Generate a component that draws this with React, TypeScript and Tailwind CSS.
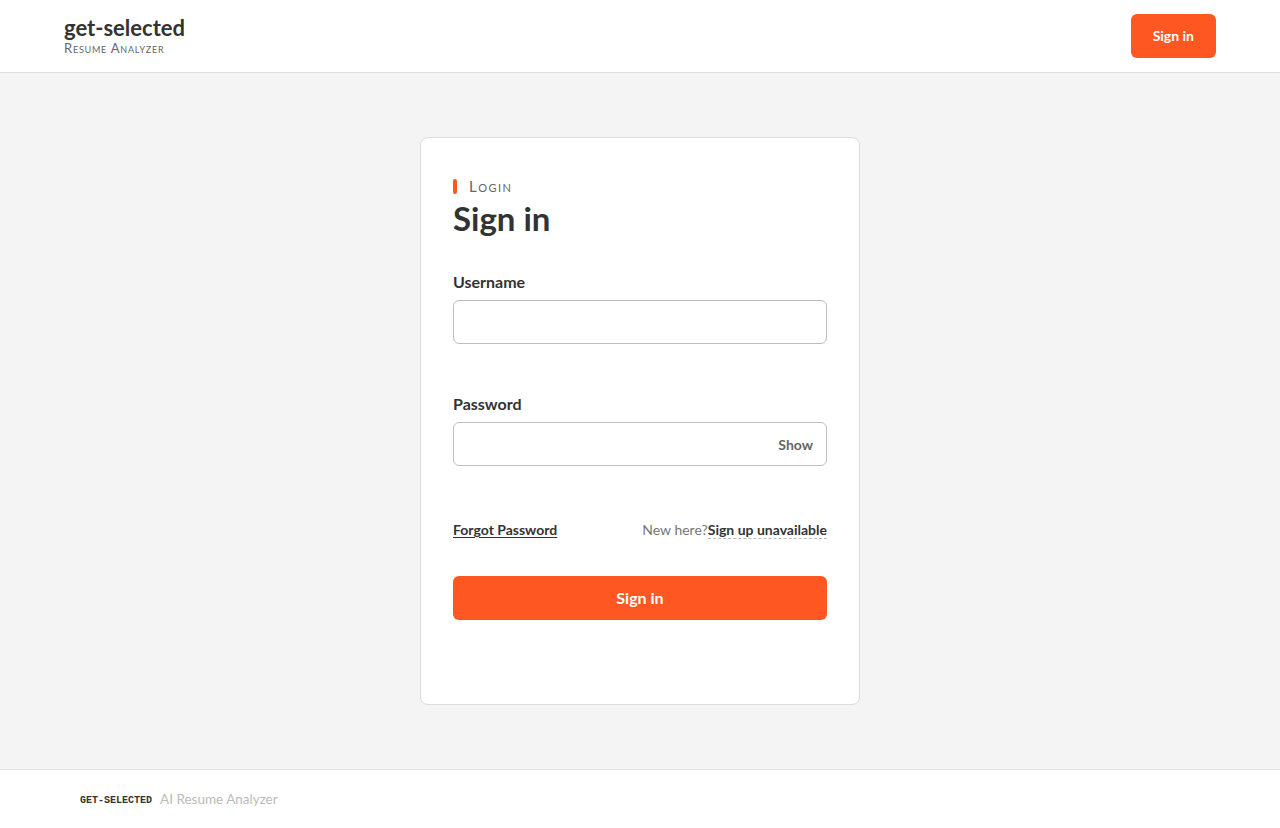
import React from 'react';

const font = { fontFamily: 'Lato, "Noto Sans", sans-serif' };

const App: React.FC = () => {
  const [show, setShow] = React.useState(false);

  return (
    <div className="min-h-screen flex flex-col bg-[#f4f4f4] text-[#333]" style={font}>
      {/* Header */}
      <header className="h-[73px] bg-white border-b border-[#e0e0e0] flex items-center justify-between px-16">
        <div className="flex flex-col -mt-[2px]">
          <span className="text-[22px] font-bold leading-[25px] text-[#333]">get-selected</span>
          <span className="text-[13px] leading-[16px] text-[#666] tracking-[0.06em] [font-variant:small-caps]">
            Resume Analyzer
          </span>
        </div>
        <button className="h-11 px-[22px] rounded-md bg-[#ff5722] text-white text-[14px] font-bold leading-none">Sign in</button>
      </header>

      {/* Main */}
      <main className="flex-1 flex justify-center pt-16 pb-16">
        <div className="w-[440px] h-[568px] bg-white border border-[#dddddd] rounded-lg px-8 pt-[40px]">
          <div className="flex items-center gap-3">
            <span className="w-1 h-[15px] rounded-sm bg-[#ff5722]" />
            <span className="text-[15px] leading-[16px] text-[#666] tracking-[0.1em] [font-variant:small-caps]">Login</span>
          </div>
          <h1 className="text-[33px] font-bold leading-[44px] mt-[2px] text-[#333]">Sign in</h1>

          <div className="mt-[32px]">
            <label className="block text-[16px] font-bold leading-5 text-[#333]">Username</label>
            <input className="mt-2 w-full h-11 rounded-md border border-[#bdbdbd] px-3 outline-none" />
          </div>

          <div className="mt-[50px]">
            <label className="block text-[16px] font-bold leading-5 text-[#333]">Password</label>
            <div className="mt-2 relative">
              <input
                type={show ? 'text' : 'password'}
                className="w-full h-11 rounded-md border border-[#bdbdbd] pl-3 pr-16 outline-none"
              />
              <button
                onClick={() => setShow(!show)}
                className="absolute right-[14px] top-1/2 -translate-y-1/2 text-[14px] font-bold text-[#666]"
              >
                Show
              </button>
            </div>
          </div>

          <div className="mt-[53px] flex items-center justify-between text-[14px]">
            <a className="font-bold underline underline-offset-2 text-[#333] cursor-pointer">Forgot Password</a>
            <span className="text-[#777]">
              New here?
              <span className="font-bold text-[#333] border-b border-dashed border-[#bbb]">Sign up unavailable</span>
            </span>
          </div>

          <button className="mt-[36px] w-full h-11 rounded-md bg-[#ff5722] text-white text-[16px] font-bold">Sign in</button>
        </div>
      </main>

      {/* Footer */}
      <footer className="h-[59px] bg-white border-t border-[#e0e0e0] flex items-center px-20 gap-2">
        <span
          className="text-[10px] font-bold text-[#333] translate-y-[1px]"
          style={{ fontFamily: '"Liberation Mono", monospace' }}
        >
          GET-SELECTED
        </span>
        <span className="text-[13.5px] text-[#bbb]">AI Resume Analyzer</span>
      </footer>
    </div>
  );
};

export default App;
